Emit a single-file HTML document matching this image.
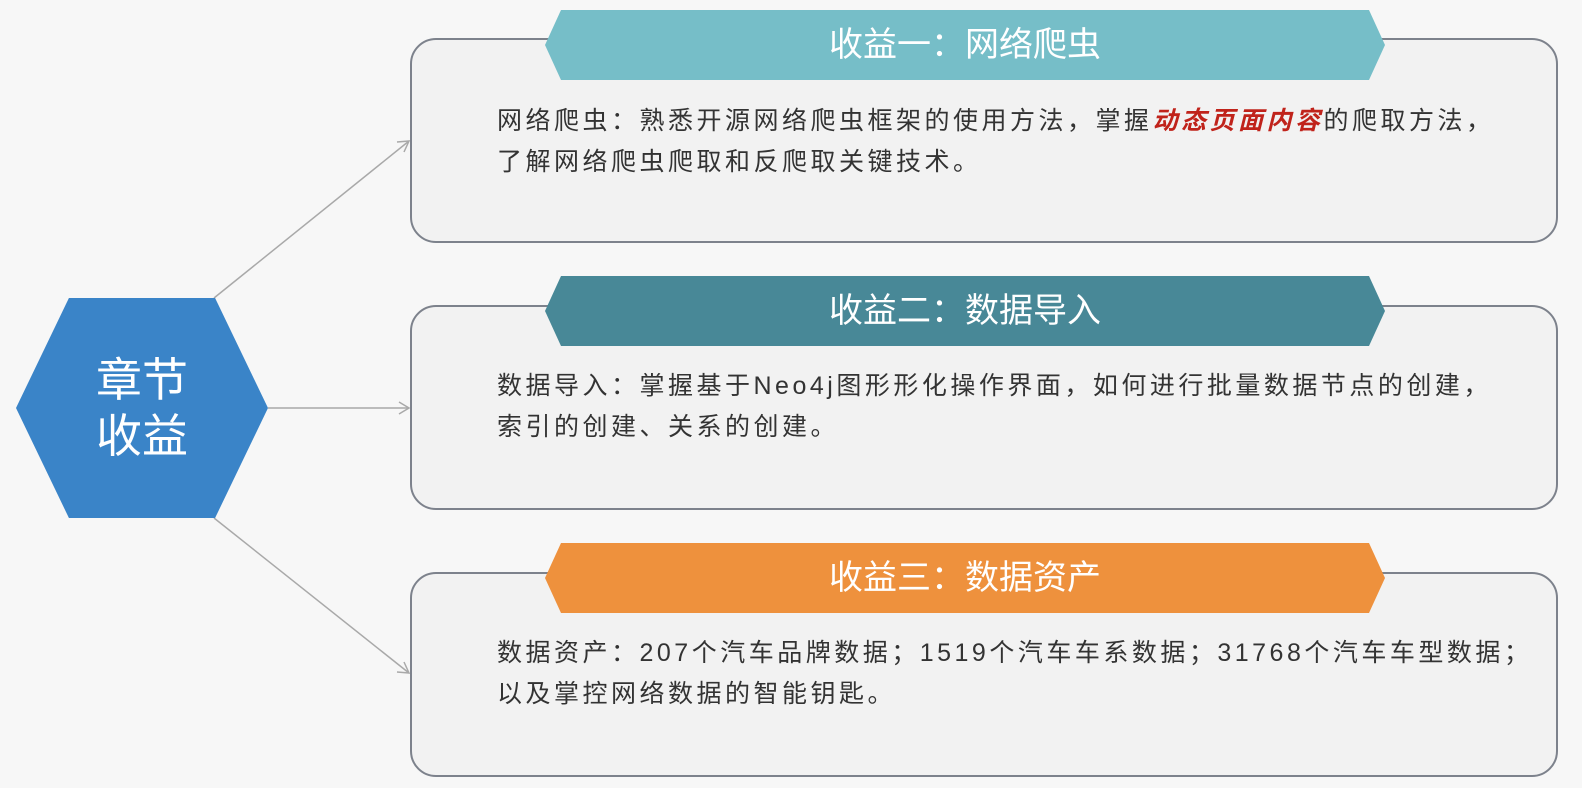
<!DOCTYPE html>
<html><head><meta charset="utf-8"><style>
html,body{margin:0;padding:0;background:#f7f7f7;width:1582px;height:788px;overflow:hidden;position:relative;font-family:"Liberation Sans","Noto Sans CJK SC",sans-serif}
.box{position:absolute;left:410px;width:1148px;height:205px;border:2px solid #7d828c;border-radius:26px;background:#f2f2f2;box-sizing:border-box}
.txt{position:absolute;left:497px;font-size:25px;line-height:41px;color:#333;white-space:nowrap;letter-spacing:3.5px}
.ban{position:absolute;left:545px;width:840px;height:70px;clip-path:polygon(16px 0,824px 0,840px 50%,824px 100%,16px 100%,0 50%);color:#fff;font-size:34px;text-align:center;line-height:70px}
.hex{position:absolute;left:16px;top:298px;width:252px;height:220px;background:#3a84c8;clip-path:polygon(21% 0,79% 0,100% 50%,79% 100%,21% 100%,0 50%);color:#fff;font-size:46px;line-height:56px;text-align:center;display:flex;align-items:center;justify-content:center}
.r{color:#c0231b;font-weight:bold;font-style:italic}
</style></head><body>
<svg width="1582" height="788" style="position:absolute;left:0;top:0">
<g stroke="#a9a9a9" stroke-width="1.5" fill="none">
<line x1="214" y1="298" x2="409" y2="141"/>
<polyline points="397,142 409,141 404,152"/>
<line x1="268" y1="408" x2="409" y2="408"/>
<polyline points="399,402 409,408 399,414"/>
<line x1="214" y1="518" x2="409" y2="673"/>
<polyline points="404,662 409,673 397,672"/>
</g></svg>
<div class="hex"><div>章节<br>收益</div></div>
<div class="box" style="top:38px"></div>
<div class="box" style="top:305px"></div>
<div class="box" style="top:572px"></div>
<div class="ban" style="top:10px;background:#76bec8">收益一：网络爬虫</div>
<div class="ban" style="top:276px;background:#488897">收益二：数据导入</div>
<div class="ban" style="top:543px;background:#ee913d">收益三：数据资产</div>
<div class="txt" style="top:101px">网络爬虫：熟悉开源网络爬虫框架的使用方法，掌握<span class="r">动态页面内容</span>的爬取方法，<br>了解网络爬虫爬取和反爬取关键技术。</div>
<div class="txt" style="top:366px">数据导入：掌握基于Neo4j图形形化操作界面，如何进行批量数据节点的创建，<br>索引的创建、关系的创建。</div>
<div class="txt" style="top:633px">数据资产：207个汽车品牌数据；1519个汽车车系数据；31768个汽车车型数据；<br>以及掌控网络数据的智能钥匙。</div>
</body></html>
